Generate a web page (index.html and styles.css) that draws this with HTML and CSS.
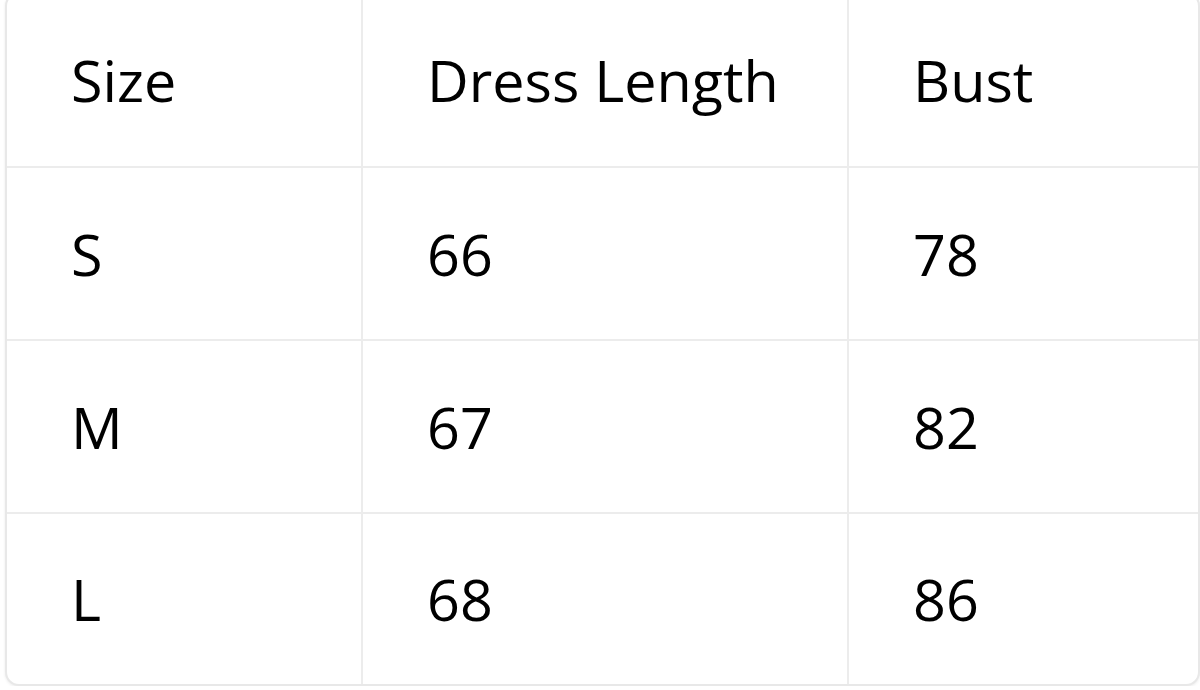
FILE: index.html
```html
<!DOCTYPE html>
<html>
<head>
<meta charset="utf-8">
<link rel="stylesheet" href="styles.css">
</head>
<body>
<div class="card">
  <table class="size-table">
    <colgroup>
      <col class="c1"><col class="c2"><col class="c3">
    </colgroup>
    <tr><td>Size</td><td>Dress Length</td><td>Bust</td></tr>
    <tr><td>S</td><td>66</td><td>78</td></tr>
    <tr><td>M</td><td>67</td><td>82</td></tr>
    <tr class="last"><td>L</td><td>68</td><td>86</td></tr>
  </table>
</div>
</body>
</html>
```
FILE: styles.css
```css
html, body {
  margin: 0;
  padding: 0;
  background: #ffffff;
  overflow: hidden;
}
body {
  padding: 0 4px 0 5px;
}
.card {
  margin-top: -8px;
  width: 1191px;
  border: 2px solid #e8e8e8;
  border-radius: 14px;
  box-shadow: 0 1px 3px rgba(0,0,0,0.08);
  overflow: hidden;
  background: #fff;
}
.size-table {
  width: 100%;
  border-collapse: collapse;
  table-layout: fixed;
  font-family: "Open Sans", "Noto Sans", sans-serif;
  font-size: 57.5px;
  color: #000;
}
.c1 { width: 355px; }
.c2 { width: 486px; }
.c3 { width: auto; }
.size-table td {
  height: 173px;
  padding: 0 0 0 64px;
  vertical-align: middle;
  border-right: 2px solid #ececec;
  border-bottom: 2px solid #ececec;
  box-sizing: border-box;
}
.size-table tr:first-child td { height: 173px; }
.size-table tr.last td { height: 171px; border-bottom: none; }
.size-table td:last-child { border-right: none; }
```
